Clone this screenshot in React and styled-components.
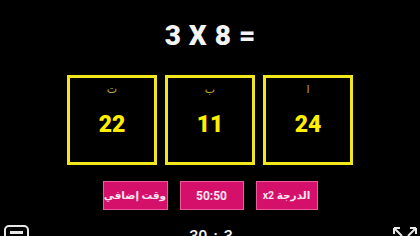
import React from 'react';
import styled, { createGlobalStyle } from 'styled-components';

const GlobalStyle = createGlobalStyle`
  html, body {
    margin: 0;
    padding: 0;
    background: #000;
    overflow: hidden;
  }
`;

const font = `Roboto, "DejaVu Sans", sans-serif`;

const Screen = styled.div`
  width: 420px;
  height: 236px;
  overflow: hidden;
  background: #000;
  display: flex;
  flex-direction: column;
  align-items: center;
  font-family: ${font};
`;

const Question = styled.h1`
  margin: 19px 0 0;
  color: #f4f4f4;
  font-size: 28px;
  font-weight: 900;
  line-height: 34px;
  word-spacing: 1px;
`;

const Choices = styled.div`
  direction: rtl;
  display: flex;
  gap: 8px;
  margin-top: 22px;
`;

const Choice = styled.div`
  box-sizing: border-box;
  width: 90px;
  height: 90px;
  border: 3px solid #f2e61c;
  display: flex;
  flex-direction: column;
  align-items: center;
`;

const Letter = styled.span`
  margin-top: 4px;
  color: #b9a92e;
  font-family: "DejaVu Sans", sans-serif;
  font-size: 11px;
  line-height: 16px;
`;

const Value = styled.span`
  margin-top: 13px;
  color: #ffee00;
  font-size: 23px;
  font-weight: 900;
  line-height: 28px;
`;

const Helpers = styled.div`
  direction: rtl;
  display: flex;
  gap: 12px;
  margin-top: 16px;
`;

const Helper = styled.button`
  box-sizing: border-box;
  width: ${p => p.$w}px;
  height: 29px;
  background: #d5106a;
  border: 1px solid #ea5c9c;
  border-radius: 0;
  color: #fbe3ee;
  font-family: ${font};
  font-size: ${p => (p.$arabic ? 10.5 : 12)}px;
  font-weight: bold;
  white-space: nowrap;
  overflow: hidden;
  padding: 0;
`;

const Footer = styled.div`
  align-self: stretch;
  display: flex;
  justify-content: space-between;
  align-items: flex-start;
  padding: 0 3px 0 4px;
  margin-top: 14px;
`;

const Score = styled.span`
  margin-top: 4px;
  color: #f4f4f4;
  font-size: 16px;
  font-weight: 500;
  line-height: 18px;
  word-spacing: 2px;
`;

const IconBox = styled.div`
  margin-top: ${p => p.$top}px;
  display: flex;
`;

const choices = [
  { letter: 'ا', value: 24 },
  { letter: 'ب', value: 11 },
  { letter: 'ت', value: 22 },
];

const helpers = [
  { label: 'الدرجة x2', w: 62, arabic: true },
  { label: '50:50', w: 64, arabic: false },
  { label: 'وقت إضافي', w: 65, arabic: true },
];

export default function App() {
  return (
    <Screen>
      <GlobalStyle />
      <Question>3 X 8 =</Question>
      <Choices>
        {choices.map(c => (
          <Choice key={c.letter}>
            <Letter>{c.letter}</Letter>
            <Value>{c.value}</Value>
          </Choice>
        ))}
      </Choices>
      <Helpers>
        {helpers.map(h => (
          <Helper key={h.label} $w={h.w} $arabic={h.arabic}>{h.label}</Helper>
        ))}
      </Helpers>
      <Footer>
        <IconBox $top={1}>
          <svg width="25" height="20" viewBox="0 0 25 20">
            <rect x="1" y="1" width="23" height="20" rx="4" fill="none" stroke="#e8e8e8" strokeWidth="2" />
            <rect x="6" y="6" width="13" height="3" fill="#e8e8e8" />
          </svg>
        </IconBox>
        <Score>30 : 3</Score>
        <IconBox $top={3}>
          <svg width="24" height="14" viewBox="0 0 24 14" fill="none" stroke="#e8e8e8" strokeWidth="2">
            <path d="M1 1 L7 1 M1 1 L1 7 M1 1 L9 9" />
            <path d="M23 1 L17 1 M23 1 L23 7 M23 1 L15 9" />
          </svg>
        </IconBox>
      </Footer>
    </Screen>
  );
}
